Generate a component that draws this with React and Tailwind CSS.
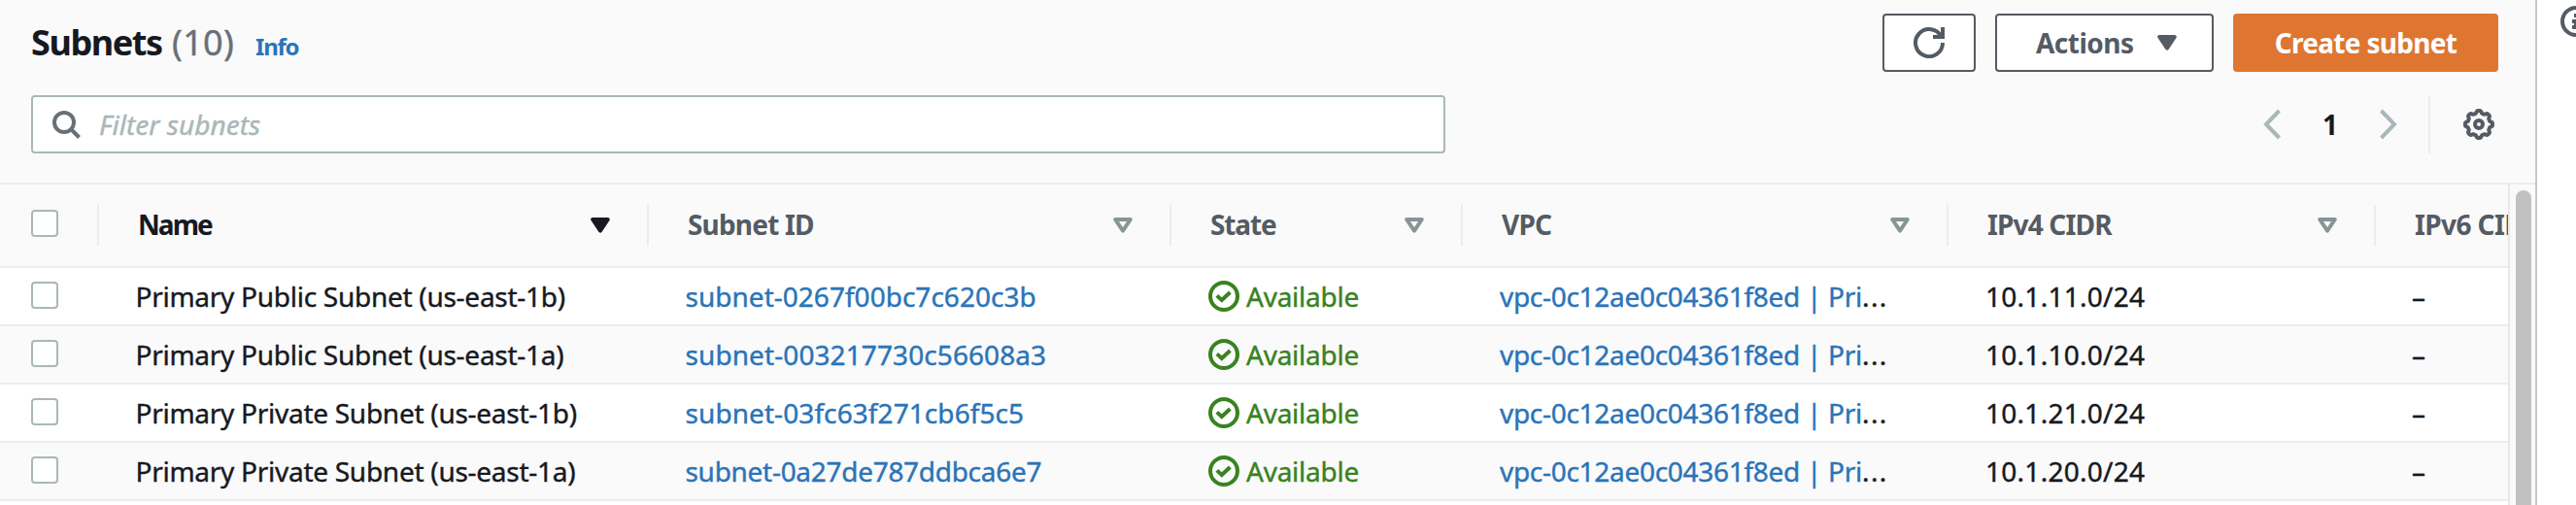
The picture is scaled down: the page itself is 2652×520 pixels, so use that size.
const columns = [
  { label: "Name", width: "w-[566px]", spacing: "tracking-[-1.95px]", sorted: true },
  { label: "Subnet ID", width: "w-[538px]", spacing: "tracking-[-0.82px]" },
  { label: "State", width: "w-[300px]", spacing: "tracking-[-1.13px]" },
  { label: "VPC", width: "w-[500px]", spacing: "tracking-[-0.79px]" },
  { label: "IPv4 CIDR", width: "w-[440px]", spacing: "tracking-[-0.85px]" },
];

const subnets = [
  { name: "Primary Public Subnet (us-east-1b)", id: "subnet-0267f00bc7c620c3b", idSpacing: "tracking-[0.02px]", cidr: "10.1.11.0/24" },
  { name: "Primary Public Subnet (us-east-1a)", id: "subnet-003217730c56608a3", idSpacing: "tracking-[0.09px]", cidr: "10.1.10.0/24" },
  { name: "Primary Private Subnet (us-east-1b)", id: "subnet-03fc63f271cb6f5c5", idSpacing: "tracking-[0.08px]", cidr: "10.1.21.0/24" },
  { name: "Primary Private Subnet (us-east-1a)", id: "subnet-0a27de787ddbca6e7", idSpacing: "tracking-[-0.29px]", cidr: "10.1.20.0/24" },
];

function gearPath() {
  const points = [];
  for (let i = 0; i < 96; i++) {
    const a = (i / 96) * Math.PI * 2;
    const wave = Math.tanh(2.2 * Math.cos(8 * a)) / Math.tanh(2.2);
    const r = 6.4 + 0.62 * wave;
    points.push(`${(8 + r * Math.cos(a)).toFixed(2)} ${(8 + r * Math.sin(a)).toFixed(2)}`);
  }
  return `M${points.join("L")}Z`;
}

function RefreshIcon() {
  return (
    <svg className="size-8" viewBox="0 0 16 16" fill="none" stroke="currentColor" strokeWidth="2">
      <path d="M15 8A7 7 0 1 1 14.3 5" />
      <path d="M10 5h5V0" />
    </svg>
  );
}

function SearchIcon() {
  return (
    <svg className="size-8 shrink-0" viewBox="0 0 32 32" fill="none" stroke="currentColor" strokeWidth="4">
      <circle cx="14" cy="14" r="10" />
      <path d="M21 21l8.5 8.5" />
    </svg>
  );
}

function GearIcon() {
  return (
    <svg className="size-8 text-[#545b64]" viewBox="0 0 16 16" fill="none" stroke="currentColor" strokeWidth="2">
      <path d={gearPath()} strokeLinejoin="round" />
      <circle cx="8" cy="8" r="2" />
    </svg>
  );
}

function Chevron({ flipped }) {
  return (
    <svg className="h-8 w-5 text-[#aab7b8]" viewBox="0 0 20 32" fill="none" stroke="currentColor" strokeWidth="4">
      <path d={flipped ? "M2.5 2L16 16L2.5 30" : "M17.5 2L4 16L17.5 30"} />
    </svg>
  );
}

function Caret({ hollow }) {
  return (
    <svg
      className="h-4 w-5 shrink-0"
      viewBox="0 0 20 16"
      fill={hollow ? "none" : "currentColor"}
      stroke="currentColor"
      strokeWidth="4"
      strokeLinejoin="round"
    >
      <path d="M2.2 2H17.8L10 13.6Z" />
    </svg>
  );
}

function StatusIcon() {
  return (
    <svg className="size-8 shrink-0" viewBox="0 0 16 16" fill="none" stroke="currentColor" strokeWidth="2">
      <circle cx="8" cy="8" r="7" />
      <path d="M4.4 7.7L6.9 10L11.2 6" />
    </svg>
  );
}

function InfoIcon() {
  return (
    <svg className="size-8 shrink-0 text-[#545b64]" viewBox="0 0 32 32" fill="none" stroke="currentColor" strokeWidth="4">
      <circle cx="16" cy="16" r="14" />
      <path d="M14 10h4M12 16h6M16 16v6M12 22h8" />
    </svg>
  );
}

function Checkbox() {
  return <span className="block size-7 rounded-[4px] border-2 border-[#aab7b8] bg-white" />;
}

function ColumnDivider() {
  return <span className="h-[42px] w-0.5 shrink-0 bg-[#eaeded]" />;
}

export default function App() {
  return (
    <div className="flex h-[520px] w-[2652px] overflow-hidden whitespace-nowrap bg-white font-['Noto_Sans','Open_Sans',sans-serif] text-[28px] text-[#16191f]">
      <main className="flex w-[2612px] shrink-0 flex-col border-r-2 border-[#c3cacd] bg-[#fafafa]">
        <header className="flex h-[188px] shrink-0 flex-col gap-6 pl-8 pr-[38px] pt-[14px]">
          <div className="flex h-[60px] items-center">
            <h1 className="flex h-[60px] items-baseline text-[36px] leading-[60px]">
              <span className="w-[145px] font-bold tracking-[-1.42px]">Subnets</span>
              <span className="w-[86px] tracking-[0.34px] text-[#687078] [-webkit-text-stroke:0.4px]">(10)</span>
              <a className="text-[24px] font-bold leading-[40px] tracking-[-1.2px] text-[#2b74b8]">Info</a>
            </h1>
            <div className="ml-auto flex gap-5 font-bold text-[#545b64]">
              <button className="flex h-[60px] w-24 items-center justify-center rounded-[4px] border-2 border-[#545b64] bg-white">
                <RefreshIcon />
              </button>
              <button className="flex h-[60px] w-[225px] items-center justify-between rounded-[4px] border-2 border-[#545b64] bg-white pl-10 pr-9">
                <span className="tracking-[-0.51px]">Actions</span>
                <Caret />
              </button>
              <button className="flex h-[60px] w-[273px] items-center justify-center rounded-[4px] bg-[#de7632] tracking-[-0.7px] text-white">
                Create subnet
              </button>
            </div>
          </div>
          <div className="flex h-[60px] items-center">
            <div className="flex h-[60px] w-[1456px] items-center gap-[14px] rounded-[4px] border-2 border-[#aab7b8] bg-white pl-[18px] text-[#687078]">
              <SearchIcon />
              <span className="pl-1 italic tracking-[0.04px] text-[#aab7b8] [-webkit-text-stroke:0.4px]">Filter subnets</span>
            </div>
            <div className="ml-auto flex items-center pr-1">
              <Chevron />
              <span className="w-[100px] text-center font-bold">1</span>
              <Chevron flipped />
              <span className="ml-[31px] mr-[34px] h-[60px] w-0.5 bg-[#eaeded]" />
              <GearIcon />
            </div>
          </div>
        </header>
        <div className="flex min-h-0 flex-1 border-t-2 border-[#eaeded]">
          <div className="w-[2582px] shrink-0 overflow-hidden">
            <div className="flex h-[86px] items-center border-b-2 border-[#eaeded] font-bold text-[#545b64]">
              <div className="flex w-[102px] shrink-0 items-center justify-between pl-8">
                <span className="-mt-1"><Checkbox /></span>
                <ColumnDivider />
              </div>
              {columns.map((col) => (
                <div key={col.label} className={`flex shrink-0 items-center ${col.width}`}>
                  <span className={`-mt-0.5 flex-1 pl-10 ${col.spacing} ${col.sorted ? "text-[#16191f]" : ""}`}>{col.label}</span>
                  <span className={`mr-[38px] ${col.sorted ? "text-[#16191f]" : "text-[#879596]"}`}>
                    <Caret hollow={!col.sorted} />
                  </span>
                  <ColumnDivider />
                </div>
              ))}
              <span className="-mt-0.5 shrink-0 pl-10 tracking-[-0.6px]">IPv6 CIDR</span>
            </div>
            {subnets.map((s) => (
              <div
                key={s.cidr}
                className="flex h-[60px] items-center border-b-2 border-[#eaeded] [-webkit-text-stroke:0.4px] odd:bg-[#fafafa] even:bg-white"
              >
                <div className="-mt-[3px] w-[102px] shrink-0 pl-8"><Checkbox /></div>
                <div className="w-[566px] shrink-0 pl-[37.5px] tracking-[-0.27px]">{s.name}</div>
                <div className={`w-[538px] shrink-0 pl-[37.5px] text-[#2b74b8] ${s.idSpacing}`}>{s.id}</div>
                <div className="flex w-[300px] shrink-0 items-center gap-[7px] pl-[38px] tracking-[-0.24px] text-[#3a8220]">
                  <StatusIcon />
                  Available
                </div>
                <div className="w-[500px] shrink-0 pl-[38px] tracking-[-0.29px]">
                  <a className="text-[#2b74b8]">vpc-0c12ae0c04361f8ed | Pri</a>
                  <span className="tracking-[1.4px]">...</span>
                </div>
                <div className="w-[440px] shrink-0 pl-[38px] tracking-[0.27px]">{s.cidr}</div>
                <div className="shrink-0 pl-[37px]">–</div>
              </div>
            ))}
            <div className="h-[60px] bg-white" />
          </div>
          <div className="flex-1 border-l-2 border-[#e6e8e8] pl-1.5 pt-1.5">
            <div className="h-[400px] w-4 rounded-full bg-[#c1c1c1]" />
          </div>
        </div>
      </main>
      <aside className="pl-6 pt-1.5">
        <InfoIcon />
      </aside>
    </div>
  );
}
